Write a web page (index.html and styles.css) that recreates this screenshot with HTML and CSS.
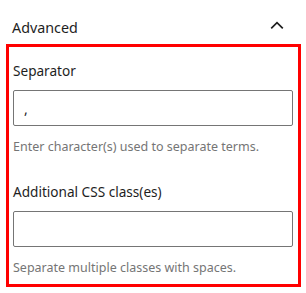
FILE: index.html
```html
<!DOCTYPE html>
<html lang="en">

<head>
    <meta charset="UTF-8">
    <title>Advanced</title>
    <link rel="stylesheet" href="styles.css">
</head>

<body>
    <div class="panel-header">
        <span class="panel-title">Advanced</span>
        <svg class="chevron" width="24" height="24" viewBox="0 0 24 24">
            <path d="M6.2 13.3 12 7.6l5.8 5.7" fill="none" stroke="#1e1e1e" stroke-width="1.7" />
        </svg>
    </div>
    <div class="panel-body">
        <div class="field">
            <label class="field-label">Separator</label>
            <input class="field-input" type="text" value=",">
            <p class="field-help">Enter character(s) used to separate terms.</p>
        </div>
        <div class="field">
            <label class="field-label">Additional CSS class(es)</label>
            <input class="field-input" type="text" value="">
            <p class="field-help">Separate multiple classes with spaces.</p>
        </div>
    </div>
</body>

</html>
```

FILE: styles.css
```css
* {
    margin: 0;
    padding: 0;
    box-sizing: border-box;
}

body {
    background: #fff;
    font-family: "Noto Sans", "Open Sans", sans-serif;
    color: #1e1e1e;
    overflow: hidden;
}

.panel-header {
    display: flex;
    align-items: center;
    justify-content: space-between;
    height: 44px;
    padding: 10px 17px 0 12px;
}

.panel-title {
    font-size: 14.3px;
}

.panel-body {
    width: 295px;
    margin-left: 6px;
    border: 3px solid #ff0000;
    padding: 14px 5px 7px 4px;
}

.field + .field {
    margin-top: 26px;
}

.field-label {
    display: block;
    font-size: 13.6px;
    line-height: 20px;
}

.field-input {
    display: block;
    width: 100%;
    height: 36px;
    margin-top: 9px;
    padding: 0 10px;
    border: 1px solid #757575;
    border-radius: 2px;
    font-family: inherit;
    font-size: 14px;
    color: #1e1e1e;
    outline: none;
}

.field-help {
    margin-top: 12px;
    font-size: 12.5px;
    line-height: 18px;
    color: #757575;
}
```
